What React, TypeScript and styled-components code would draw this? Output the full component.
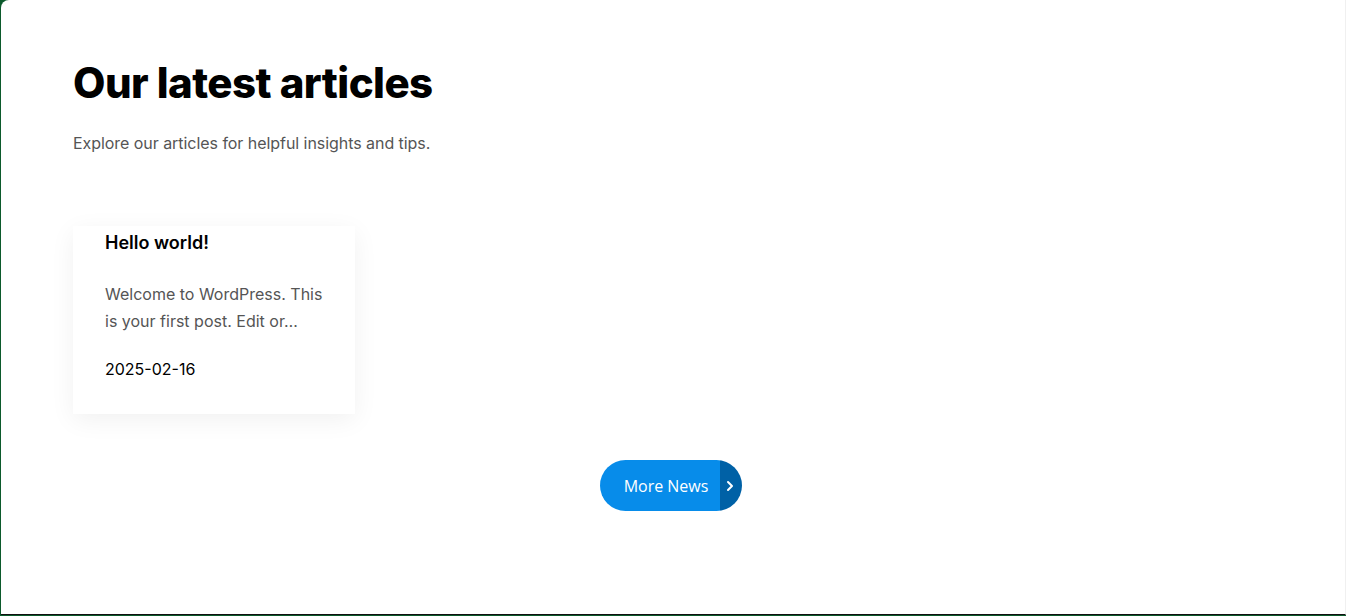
import React from 'react';
import styled, { createGlobalStyle } from 'styled-components';

const GlobalStyle = createGlobalStyle`
  html, body {
    margin: 0;
    padding: 0;
    background: #0c5a2c;
  }
  * { box-sizing: border-box; }
`;

const Page = styled.div`
  margin-left: 1px;
  height: 615px;
  background: #fff;
  border-top-left-radius: 8px;
  border-right: 1px solid #f0f0f0;
  border-bottom: 1px solid #111;
  overflow: hidden;
  font-family: Inter, "Noto Sans", sans-serif;
`;

const Section = styled.section`
  width: 1200px;
  padding-top: 58px;
  margin-left: 72px;
`;

const Heading = styled.h2`
  margin: 0;
  font-size: 42px;
  font-weight: 800;
  letter-spacing: -0.55px;
  line-height: 50px;
  color: #000;
`;

const Lead = styled.p`
  margin: 23px 0 0;
  font-size: 16px;
  line-height: 24px;
  color: #555;
  letter-spacing: -0.05px;
`;

const Grid = styled.div`
  display: grid;
  grid-template-columns: repeat(4, 282px);
  gap: 24px;
  margin-top: 71px;
`;

const Card = styled.article`
  background: #fff;
  box-shadow: 0 6px 24px rgba(0, 0, 0, 0.06);
  padding: 3px 32px 33px;
`;

const CardTitle = styled.h3`
  margin: 0;
  font-size: 18px;
  font-weight: 600;
  line-height: 28px;
  color: #000;
`;

const Excerpt = styled.p`
  margin: 24px 0 0;
  font-size: 16px;
  line-height: 27px;
  color: #555;
`;

const Date = styled.div`
  margin-top: 22px;
  font-size: 16px;
  line-height: 24px;
  color: #000;
`;

const ButtonRow = styled.div`
  display: flex;
  justify-content: center;
  margin-top: 46px;
  margin-left: -75px;
  width: 1346px;
`;

const Button = styled.a`
  display: flex;
  align-items: stretch;
  height: 51px;
  border-radius: 26px;
  overflow: hidden;
  text-decoration: none;
  cursor: pointer;
`;

const ButtonLabel = styled.span`
  display: flex;
  align-items: center;
  padding: 0 12px 0 24px;
  background: #078cea;
  color: #fff;
  font-family: "Open Sans", sans-serif;
  font-size: 16px;
`;

const ButtonArrow = styled.span`
  display: flex;
  align-items: center;
  justify-content: center;
  width: 22px;
  padding-right: 2px;
  background: #0061a6;
  color: #fff;
`;

export default function App() {
  return (
    <>
      <GlobalStyle />
      <Page>
        <Section>
          <Heading>Our latest articles</Heading>
          <Lead>Explore our articles for helpful insights and tips.</Lead>
          <Grid>
            <Card>
              <CardTitle>Hello world!</CardTitle>
              <Excerpt>Welcome to WordPress. This is your first post. Edit or…</Excerpt>
              <Date>2025-02-16</Date>
            </Card>
          </Grid>
          <ButtonRow>
            <Button>
              <ButtonLabel>More News</ButtonLabel>
              <ButtonArrow>
                <svg width="8" height="12" viewBox="0 0 8 12" fill="none">
                  <path d="M2 2l4 4-4 4" stroke="#fff" strokeWidth="2" strokeLinecap="round" strokeLinejoin="round" />
                </svg>
              </ButtonArrow>
            </Button>
          </ButtonRow>
        </Section>
      </Page>
    </>
  );
}
